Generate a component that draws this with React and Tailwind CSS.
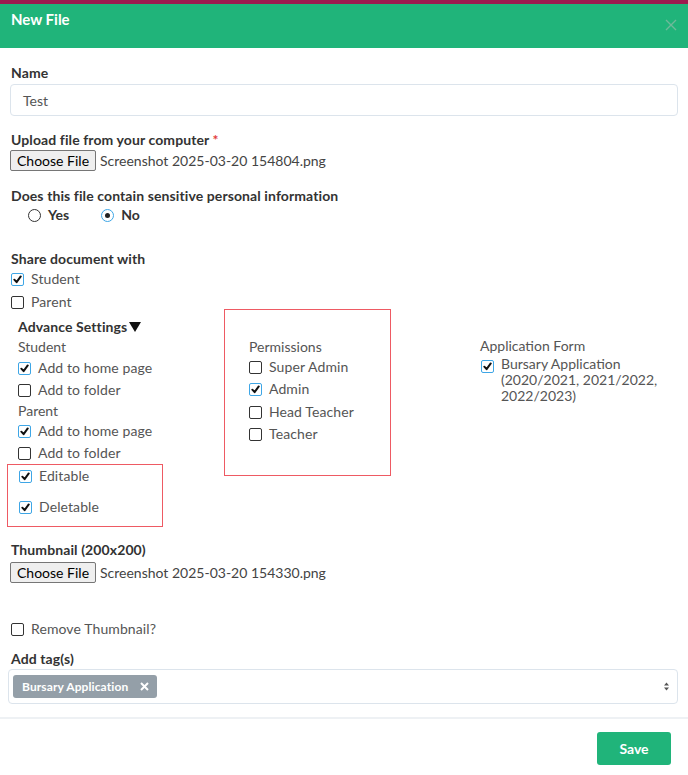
import React from "react";

const font = { fontFamily: "Lato, 'Open Sans', sans-serif" };

function Check({ checked }) {
  return (
    <span
      className={
        "inline-flex h-[13px] w-[13px] shrink-0 items-center justify-center rounded-[2px] border bg-white " +
        (checked ? "border-[#3ea6e6]" : "border-[#333]")
      }
    >
      {checked && (
        <svg width="9" height="9" viewBox="0 0 10 10">
          <path d="M1.5 5.2 L4 8 L8.6 1.6" fill="none" stroke="#111" strokeWidth="2.2" strokeLinecap="round" strokeLinejoin="round" />
        </svg>
      )}
    </span>
  );
}

function CheckRow({ checked, label, className = "" }) {
  return (
    <div className={"flex h-[22px] items-center gap-[7px] text-[14px] leading-[22px] tracking-[0.1px] text-[#555] " + className}>
      <Check checked={checked} />
      <span>{label}</span>
    </div>
  );
}

function Radio({ checked }) {
  return (
    <span
      className={
        "inline-flex h-[13px] w-[13px] items-center justify-center rounded-full border " +
        (checked ? "border-[#3ea6e6]" : "border-[#333]")
      }
    >
      {checked && <span className="h-[5px] w-[5px] rounded-full bg-[#222]" />}
    </span>
  );
}

function FileInput({ name }) {
  return (
    <div className="flex items-center gap-[4px]">
      <span className="flex h-[21px] items-center rounded-[2px] border border-[#767676] bg-[#efefef] px-[6px] text-[14px] text-black">
        Choose File
      </span>
      <span className="text-[14px] text-[#444]">{name}</span>
    </div>
  );
}

const label = "pl-[1px] text-[14px] font-bold leading-[18px] tracking-[0.1px] text-[#333]";

export default function App() {
  return (
    <div className="h-[775px] w-[688px] overflow-hidden bg-white" style={font}>
      <div className="h-[4px] bg-[#9d1b4f]" />
      <div className="flex h-[44px] items-start justify-between bg-[#20b47a] px-[11px] pt-[5px]">
        <span className="text-[15px] font-bold leading-[20px] text-white">New File</span>
        <svg className="mt-[10px]" width="12" height="12" viewBox="0 0 12 12">
          <path d="M1 1 L11 11 M11 1 L1 11" stroke="#6fb99a" strokeWidth="1.4" />
        </svg>
      </div>

      <div className="px-[10px]">
        <div className={"mt-[16px] " + label}>Name</div>
        <div className="mt-[2px] flex h-[32px] items-center rounded-[4px] border border-[#dce4ec] px-[12px] text-[14px] text-[#555]">
          Test
        </div>

        <div className={"mt-[15px] " + label}>
          Upload file from your computer <span className="text-[#e23c3c]">*</span>
        </div>
        <div className="mt-[1px]">
          <FileInput name="Screenshot 2025-03-20 154804.png" />
        </div>

        <div className={"mt-[16px] " + label}>Does this file contain sensitive personal information</div>
        <div className="flex items-center pl-[18px] text-[14px] font-bold leading-[20px] text-[#333]">
          <Radio checked={false} />
          <span className="ml-[7px]">Yes</span>
          <span className="ml-[32px]" />
          <Radio checked={true} />
          <span className="ml-[7px]">No</span>
        </div>

        <div className={"mt-[25px] " + label}>Share document with</div>
        <CheckRow checked label="Student" className="pl-[1px]" />
        <CheckRow checked={false} label="Parent" className="mt-[1px] pl-[1px]" />

        <div className="flex">
          <div className="ml-[8px] w-[206px] pt-[4px]">
            <div className="flex items-center text-[14px] font-bold leading-[20px] tracking-[0.1px] text-[#333]">
              Advance Settings
              <svg className="ml-[2px]" width="12" height="10" viewBox="0 0 12 10">
                <path d="M0 0 H12 L6 10 Z" fill="#111" />
              </svg>
            </div>
            <div className="text-[14px] leading-[20px] text-[#555]">Student</div>
            <CheckRow checked label="Add to home page" />
            <CheckRow checked={false} label="Add to folder" />
            <div className="text-[14px] leading-[19px] text-[#555]">Parent</div>
            <CheckRow checked label="Add to home page" />
            <CheckRow checked={false} label="Add to folder" />
            <div className="-ml-[11px] w-[156px] border border-[#ee5a63] pb-[8px] pl-[11px]">
              <CheckRow checked label="Editable" />
              <CheckRow checked label="Deletable" className="mt-[9px]" />
            </div>
          </div>

          <div className="mt-[-4px] h-[167px] w-[167px] border border-[#ee5a63] pl-[24px] pt-[28px]">
            <div className="text-[14px] leading-[18px] text-[#555]">Permissions</div>
            <CheckRow checked={false} label="Super Admin" />
            <CheckRow checked label="Admin" />
            <CheckRow checked={false} label="Head Teacher" className="mt-[1px]" />
            <CheckRow checked={false} label="Teacher" />
          </div>

          <div className="ml-[89px] pt-[23px]">
            <div className="text-[14px] leading-[20px] text-[#555]">Application Form</div>
            <div className="flex items-start gap-[7px] text-[14px] leading-[16px] text-[#555]">
              <span className="mt-[2px] pl-[1px]">
                <Check checked />
              </span>
              <span className="w-[160px]">Bursary Application (2020/2021, 2021/2022, 2022/2023)</span>
            </div>
          </div>
        </div>

        <div className={"mt-[14px] " + label}>Thumbnail (200x200)</div>
        <div className="mt-[3px]">
          <FileInput name="Screenshot 2025-03-20 154330.png" />
        </div>

        <CheckRow checked={false} label="Remove Thumbnail?" className="mt-[35px] pl-[1px]" />

        <div className={"mt-[10px] " + label}>Add tag(s)</div>
        <div className="-ml-[2px] mt-[1px] flex h-[35px] items-center justify-between rounded-[4px] border border-[#dce4ec] pl-[4px] pr-[8px]">
          <span className="flex h-[23px] items-center gap-[12px] rounded-[3px] bg-[#949fa8] pl-[9px] pr-[8px] text-[12px] font-bold tracking-[0.1px] text-white">
            Bursary Application
            <svg width="9" height="9" viewBox="0 0 9 9">
              <path d="M1 1 L8 8 M8 1 L1 8" stroke="#fff" strokeWidth="2" />
            </svg>
          </span>
          <svg width="5" height="9" viewBox="0 0 5 9">
            <path d="M0 3.5 L2.5 0.5 L5 3.5 Z M0 5.5 L2.5 8.5 L5 5.5 Z" fill="#555" />
          </svg>
        </div>
      </div>

      <div className="mt-[13px] border-t-2 border-[#eef1f4]" />
      <div className="flex justify-end px-[17px] pt-[13px]">
        <span className="flex h-[33px] w-[74px] items-center justify-center rounded-[3px] bg-[#20b47a] text-[14px] font-bold text-white">
          Save
        </span>
      </div>
    </div>
  );
}
